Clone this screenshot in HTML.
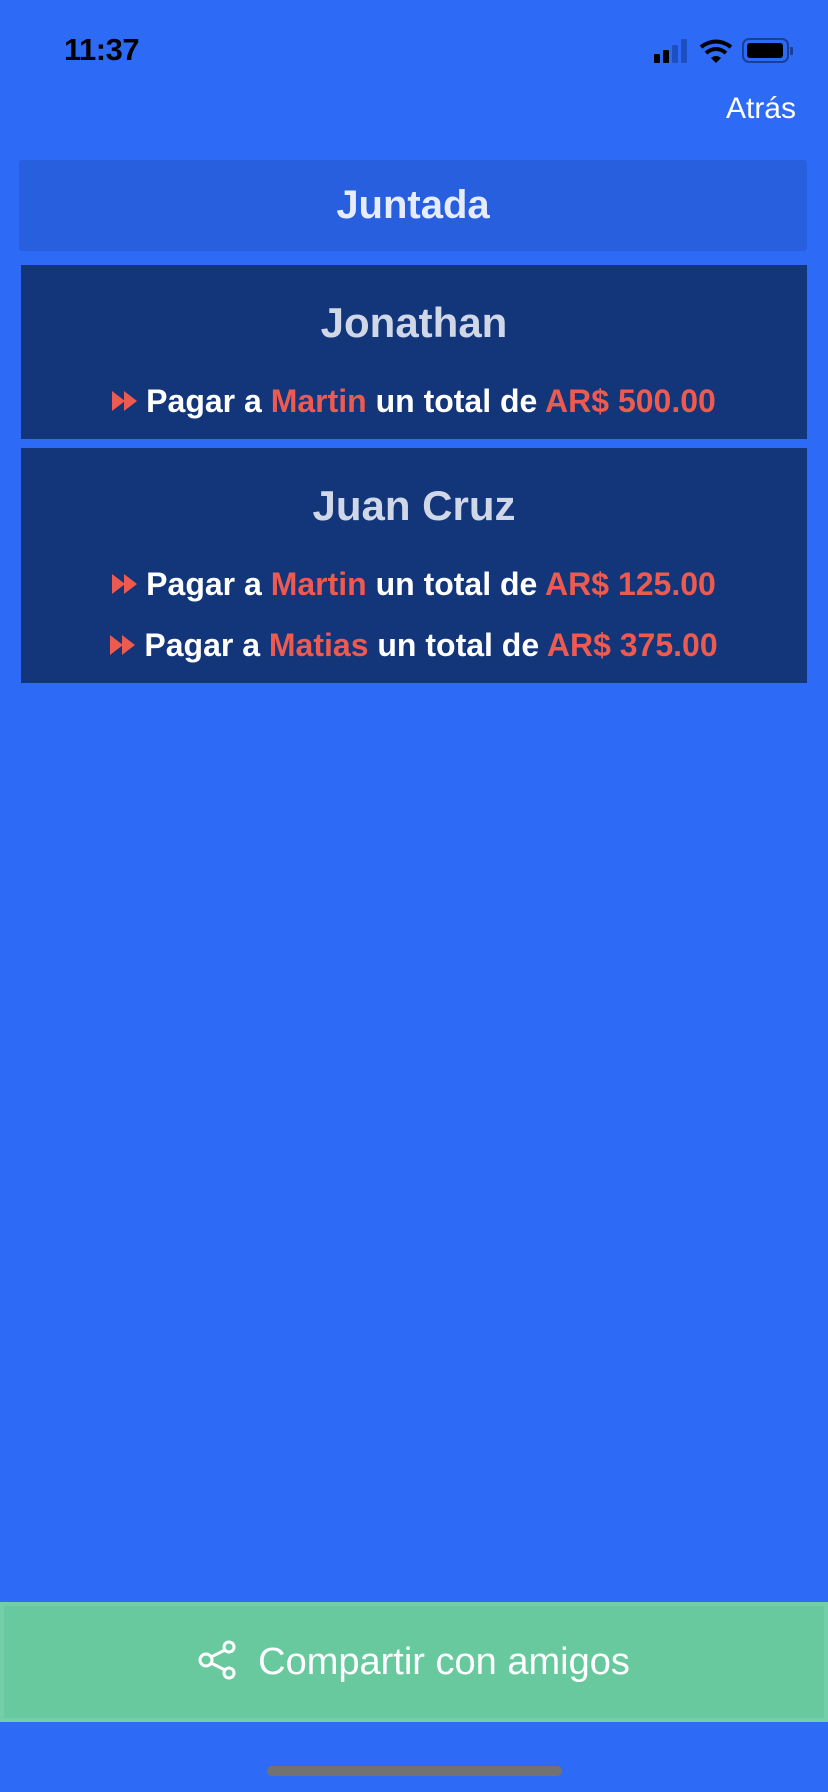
<!DOCTYPE html>
<html><head><meta charset="utf-8"><style>
*{margin:0;padding:0;box-sizing:border-box}
body{width:828px;height:1792px;background:#2d6af6;font-family:"Liberation Sans",sans-serif;position:relative;overflow:hidden}
.abs{position:absolute}
.time{left:64px;top:32px;font-size:31px;font-weight:bold;color:#000;letter-spacing:-0.5px}
.atras{right:32px;top:92px;font-size:30px;color:#fff}
.hdr{left:19px;top:160px;width:788px;height:91px;background:#275fdf;border-radius:3px;color:#e6ecfb;font-weight:bold;font-size:40px;text-align:center;line-height:91px}
.card{left:21px;width:786px;background:#133579;text-align:center}
.name{color:#d0d8e8;font-weight:bold;font-size:42px}
.line{color:#fff;font-weight:bold;font-size:32px;white-space:nowrap}
.r{color:#ed5a4f}
.arr{display:inline-block;vertical-align:middle;margin-right:8px;position:relative;top:-3px}
.btn{left:0;top:1602px;width:828px;height:120px;background:#69c99e;border:4px solid #73cfa8;color:#fff;font-size:38px;text-align:center;line-height:112px}
.bar{left:267px;top:1766px;width:295px;height:10px;border-radius:5px;background:#727272}
</style></head><body>
<div class="abs time">11:37</div>
<svg class="abs" style="left:652px;top:36px" width="142" height="28" viewBox="0 0 142 28">
<rect x="2" y="18" width="6" height="9" rx="1" fill="#000"/>
<rect x="11" y="14" width="6" height="13" rx="1" fill="#000"/>
<rect x="20" y="9" width="6" height="18" rx="1" fill="#1e4fc0"/>
<rect x="29" y="3" width="6" height="24" rx="1" fill="#1e4fc0"/>
<path d="M49 11 Q64 0 79 11" stroke="#000" stroke-width="4" fill="none"/>
<path d="M54 17 Q64 9 74 17" stroke="#000" stroke-width="4" fill="none"/>
<path d="M59 22 L64 27 L69 22 Q64 18 59 22Z" fill="#000"/>
<rect x="91" y="3" width="45" height="23" rx="6" stroke="#1a3f9a" stroke-width="2" fill="none"/>
<rect x="95" y="7" width="36" height="15" rx="3" fill="#000"/>
<rect x="138" y="11" width="3" height="8" rx="1" fill="#1a3f9a"/>
</svg>
<div class="abs atras">Atrás</div>
<div class="abs hdr">Juntada</div>

<div class="abs card" style="top:265px;height:174px">
<div class="name" style="position:absolute;top:34px;width:100%">Jonathan</div>
<div class="line" style="position:absolute;top:118px;width:100%"><svg class="arr" width="26" height="22" viewBox="0 0 26 22"><path d="M0 1 L13 11 L0 21Z M12 1 L25 11 L12 21Z" fill="#ed5a4f"/></svg>Pagar a <span class="r">Martin</span> un total de <span class="r">AR$ 500.00</span></div>
</div>

<div class="abs card" style="top:448px;height:235px">
<div class="name" style="position:absolute;top:34px;width:100%">Juan Cruz</div>
<div class="line" style="position:absolute;top:118px;width:100%"><svg class="arr" width="26" height="22" viewBox="0 0 26 22"><path d="M0 1 L13 11 L0 21Z M12 1 L25 11 L12 21Z" fill="#ed5a4f"/></svg>Pagar a <span class="r">Martin</span> un total de <span class="r">AR$ 125.00</span></div>
<div class="line" style="position:absolute;top:179px;width:100%"><svg class="arr" width="26" height="22" viewBox="0 0 26 22"><path d="M0 1 L13 11 L0 21Z M12 1 L25 11 L12 21Z" fill="#ed5a4f"/></svg>Pagar a <span class="r">Matias</span> un total de <span class="r">AR$ 375.00</span></div>
</div>

<div class="abs btn"><svg width="38" height="40" viewBox="0 0 38 40" style="vertical-align:middle;margin-right:22px;position:relative;top:-4px"><g stroke="#fff" stroke-width="3" fill="none"><circle cx="31" cy="7" r="5"/><circle cx="31" cy="33" r="5"/><circle cx="8" cy="20" r="6"/><path d="M13 17 L27 10 M13 23 L27 30"/></g></svg>Compartir con amigos</div>
<div class="abs bar"></div>
</body></html>
